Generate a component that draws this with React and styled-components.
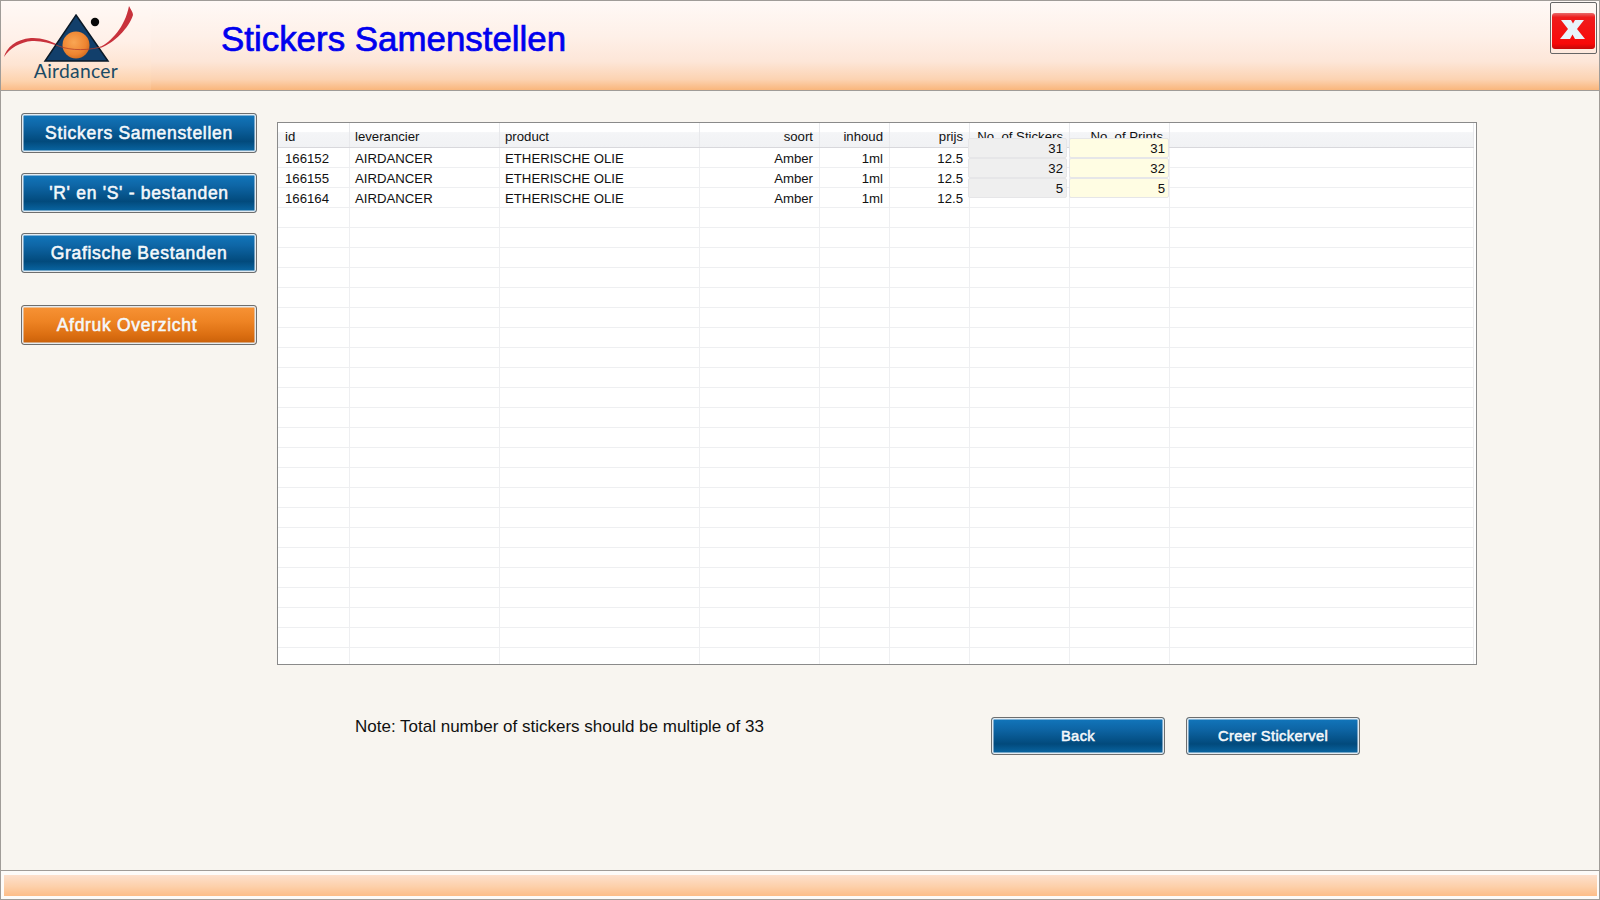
import React from "react";
import styled, { createGlobalStyle } from "styled-components";

const Global = createGlobalStyle`
  html, body { margin: 0; padding: 0; background: #f8f5f0; }
  * { box-sizing: border-box; }
  #root { width: 1600px; height: 900px; overflow: hidden; }
`;

const Win = styled.div`
  width: 1600px; height: 900px;
  display: flex; flex-direction: column;
  border: 1px solid #a09c98;
  background: #f8f5f0;
  font-family: "Liberation Sans", Arial, sans-serif;
  color: #111;
`;
const Header = styled.header`
  height: 90px; flex: none;
  display: flex; align-items: flex-start;
  border-bottom: 1px solid #a09c98;
  background: linear-gradient(180deg, #fff9f6 0%, #fef0e8 40%, #fde6d8 68%, #fcd3b2 88%, #f9b67c 100%);
`;
const LogoBox = styled.div`
  width: 150px; height: 89px; flex: none;
  background: linear-gradient(180deg, #fff9f6 0%, #fff0e8 45%, #fee4d2 72%, #fdd3ae 90%, #fbbc88 100%);
`;
const Title = styled.h1`
  margin: 16px 0 0 70px;
  font-size: 34.9px; line-height: 43px; font-weight: 400;
  color: #0000ee;
  -webkit-text-stroke: 0.7px #0000ee;
`;
const CloseButton = styled.button`
  margin: 1px 2px 0 auto; padding: 6px 1px 0;
  width: 47px; height: 52px;
  display: block;
  border: 1px solid #666; border-radius: 2px;
  background: transparent;
`;
const Main = styled.main`
  flex: 1; display: flex; min-height: 0;
`;
const Sidebar = styled.nav`
  width: 256px; flex: none;
  padding: 22px 0 0 20px;
  display: flex; flex-direction: column; gap: 20px;
`;
const Btn = styled.button`
  display: block; padding: 0;
  width: ${p => p.$w}px; height: ${p => p.$h}px;
  border: 1px solid #6e6e6e; border-radius: 3px;
  box-shadow: inset 0 0 0 1.5px #e4ebf1;
  background: ${p => p.$orange
    ? "linear-gradient(180deg,#f79336 0%,#ee8424 40%,#dc6f12 75%,#c85f08 100%)"
    : "linear-gradient(180deg,#1277bd 0%,#0e66a6 30%,#024a7c 72%,#0a68a6 100%)"};
  color: #f4f8fb;
  font-family: "Liberation Sans", Arial, sans-serif;
  font-weight: 400;
  -webkit-text-stroke: 0.55px #f4f8fb;
  letter-spacing: ${p => p.$ls}px;
  font-size: ${p => p.$fs}px;
  padding-right: ${p => p.$pr || 0}px;
  margin-top: ${p => p.$mt || 0}px;
`;
const Content = styled.section`
  flex: 1; min-width: 0; padding: 31px 0 0 20px;
  display: flex; flex-direction: column;
`;
const Table = styled.div`
  position: relative;
  width: 1200px; height: 543px;
  border: 1px solid #8a8a8a;
  background: #fff;
  overflow: hidden;
  font-size: 13.2px;
`;
const HeadRow = styled.div`
  display: grid; height: 25px;
  grid-template-columns: 72px 150px 200px 120px 70px 80px 100px 100px 1fr;
  margin-right: 2px;
  border-bottom: 1px solid #d8d8dc;
  background: linear-gradient(180deg, #fff 0%, #fff 36%, #f4f5f7 40%, #f1f2f4 100%);
`;
const HeadCell = styled.div`
  border-right: 1px solid #e8e9ec;
  padding: 0 6px 0 5px;
  line-height: 28px;
  white-space: nowrap; overflow: hidden;
  text-align: ${p => (p.$right ? "right" : "left")};
  &:first-child { padding-left: 7px; }
`;
const Row = styled.div`
  display: grid; height: 20px;
  grid-template-columns: 72px 150px 200px 120px 70px 80px 100px 100px 1fr;
  margin-right: 2px;
  border-bottom: 1px solid #eeeff1;
`;
const Cell = styled.div`
  border-right: 1px solid #eeeff1;
  padding: 0 6px 0 5px;
  line-height: 22px;
  white-space: nowrap; overflow: hidden;
  text-align: ${p => (p.$right ? "right" : "left")};
  &:first-child { padding-left: 7px; }
`;
const Editors = styled.div`
  position: absolute; top: 15px;
  left: ${p => p.$left}px;
  width: ${p => p.$width}px;
  display: flex; flex-direction: column;
`;
const Editor = styled.div`
  height: 20px;
  border: 1px solid #e6e6e8;
  border-radius: 2px;
  background: ${p => p.$bg};
  text-align: right;
  padding-right: 3px;
  line-height: 19px;
`;
const ActionRow = styled.div`
  display: flex; align-items: flex-start;
  margin-top: 52px;
  padding-left: 78px;
`;
const Note = styled.div`
  width: 636px;
  font-size: 17px; line-height: 20px;
`;
const Actions = styled.div`
  display: flex; gap: 21px;
`;
const Footer = styled.footer`
  height: 29px; flex: none;
  border-top: 1px solid #a09c98;
  background: #fdfbf9;
  padding: 4px 2px 2px 3px;
`;
const FooterBar = styled.div`
  height: 21px;
  background: linear-gradient(180deg, #fde0cd 0%, #fdd0aa 55%, #fdbd88 100%);
`;

const columns = [
  ["id"], ["leverancier"], ["product"], ["soort", 1], ["inhoud", 1], ["prijs", 1],
  ["No. of Stickers", 1], ["No. of Prints", 1], [""],
];
const data = [
  { id: "166152", n: "31" },
  { id: "166155", n: "32" },
  { id: "166164", n: "5" },
];
const blanks = Array.from({ length: 23 });

function Logo() {
  return (
    <svg width="150" height="89" viewBox="0 0 150 89">
      <path d="M3 56 C5 47 15 38 30 37 C40 36.5 50 40 56 43.5 L56 44.5 C49 42 40 39.5 31 40 C19 41 9 47 3 56 Z" fill="#c8323c" />
      <path d="M99 46 C110 41 124 26 128 5 C130 9 132 11 132 14 C128 27 113 42 100 46.8 Z" fill="#c8323c" />
      <path d="M75 14 L107 60 L44 60 Z" fill="#123f6b" stroke="#0b1a28" strokeWidth="1.5" strokeLinejoin="miter" />
      <defs>
        <radialGradient id="ball" cx="0.42" cy="0.4" r="0.65">
          <stop offset="0" stopColor="#f9a654" />
          <stop offset="0.7" stopColor="#ee8430" />
          <stop offset="1" stopColor="#cf6a20" />
        </radialGradient>
      </defs>
      <circle cx="75" cy="44" r="13.5" fill="url(#ball)" />
      <path d="M55 44 C64 48 80 51 100 46" fill="none" stroke="#b5402c" strokeWidth="0.8" />
      <circle cx="94" cy="21" r="4.2" fill="#080808" />
      <text x="75" y="77" textAnchor="middle" fontFamily="Lato, 'Open Sans', sans-serif" fontSize="19.3" letterSpacing="0.3" fill="#1b4a64">Airdancer</text>
    </svg>
  );
}

function CloseIcon() {
  return (
    <svg width="43" height="36" viewBox="0 0 43 36" style={{ display: "block" }}>
      <defs>
        <linearGradient id="red" x1="0" y1="0" x2="0" y2="1">
          <stop offset="0" stopColor="#e86a6a" />
          <stop offset="0.12" stopColor="#ef1c1c" />
          <stop offset="0.85" stopColor="#f80808" />
          <stop offset="1" stopColor="#c40808" />
        </linearGradient>
      </defs>
      <rect x="0" y="0" width="43" height="36" rx="3" fill="url(#red)" />
      <path d="M9 7 H19 L21 10.5 L23 7 H32 L25 16 L33 26 H23 L20.5 21.5 L18 26 H8 L16 16 Z" fill="#e8f3fa" />
    </svg>
  );
}

export default function App() {
  return (
    <>
      <Global />
      <Win>
        <Header>
          <LogoBox><Logo /></LogoBox>
          <Title>Stickers Samenstellen</Title>
          <CloseButton aria-label="Sluiten"><CloseIcon /></CloseButton>
        </Header>
        <Main>
          <Sidebar>
            <Btn $w={236} $h={40} $fs={17.5} $ls={0.7}>Stickers Samenstellen</Btn>
            <Btn $w={236} $h={40} $fs={17.5} $ls={0.7}>'R' en 'S' - bestanden</Btn>
            <Btn $w={236} $h={40} $fs={17.5} $ls={0.7}>Grafische Bestanden</Btn>
            <Btn $w={236} $h={40} $fs={17.5} $ls={0.7} $orange $pr={24} $mt={12}>Afdruk Overzicht</Btn>
          </Sidebar>
          <Content>
            <Table>
              <HeadRow>
                {columns.map(([label, right], i) => (
                  <HeadCell key={i} $right={right}>{label}</HeadCell>
                ))}
              </HeadRow>
              {data.map(r => (
                <Row key={r.id}>
                  <Cell>{r.id}</Cell>
                  <Cell>AIRDANCER</Cell>
                  <Cell>ETHERISCHE OLIE</Cell>
                  <Cell $right>Amber</Cell>
                  <Cell $right>1ml</Cell>
                  <Cell $right>12.5</Cell>
                  <Cell />
                  <Cell />
                  <Cell />
                </Row>
              ))}
              {blanks.map((_, i) => (
                <Row key={i}>
                  {columns.map((_, j) => <Cell key={j} />)}
                </Row>
              ))}
              <Editors $left={690} $width={99}>
                {data.map(r => <Editor key={r.id} $bg="#efefef">{r.n}</Editor>)}
              </Editors>
              <Editors $left={791} $width={100}>
                {data.map(r => <Editor key={r.id} $bg="#fffde3">{r.n}</Editor>)}
              </Editors>
            </Table>
            <ActionRow>
              <Note>Note: Total number of stickers should be multiple of 33</Note>
              <Actions>
                <Btn $w={174} $h={38} $fs={14.7} $ls={0.35}>Back</Btn>
                <Btn $w={174} $h={38} $fs={14.7} $ls={0.35}>Creer Stickervel</Btn>
              </Actions>
            </ActionRow>
          </Content>
        </Main>
        <Footer><FooterBar /></Footer>
      </Win>
    </>
  );
}
